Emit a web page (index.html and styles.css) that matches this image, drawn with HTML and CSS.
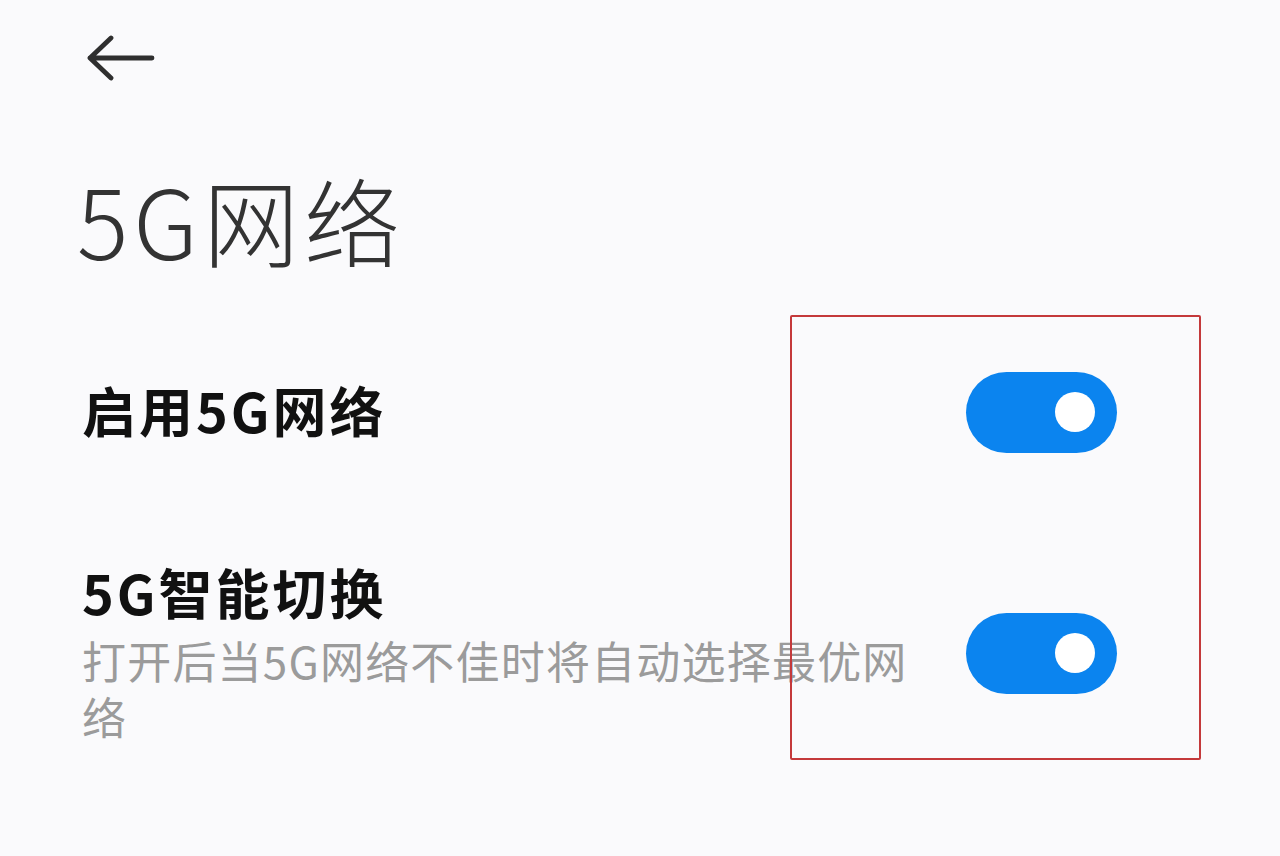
FILE: index.html
```html
<!DOCTYPE html>
<html lang="zh-CN">
<head>
<meta charset="utf-8">
<link rel="stylesheet" href="styles.css">
</head>
<body>
<div class="page">
  <header class="header">
    <svg class="back" viewBox="0 0 68 46" width="68" height="46">
      <path d="M24 3 L3 23 L24 43 M3 23 H65" fill="none" stroke="#2f2f2f" stroke-width="4.8" stroke-linecap="round" stroke-linejoin="round"/>
    </svg>
  </header>
  <h1 class="title">5G网络</h1>
  <div class="list">
    <div class="row row-single">
      <div class="text">
        <div class="label">启用5G网络</div>
      </div>
      <div class="toggle toggle-a"><span class="knob"></span></div>
    </div>
    <div class="row row-double">
      <div class="text">
        <div class="label label-top">5G智能切换</div>
        <div class="desc">打开后当5G网络不佳时将自动选择最优网络</div>
      </div>
      <div class="toggle toggle-b"><span class="knob"></span></div>
    </div>
    <div class="highlight"></div>
  </div>
</div>
</body>
</html>
```
FILE: styles.css
```css
html, body {
  margin: 0;
  padding: 0;
}
body {
  background: #fafafc;
  font-family: "Noto Sans CJK SC", "Noto Sans", sans-serif;
  width: 1280px;
  height: 856px;
  overflow: hidden;
}
.page {
  padding: 0 163px 0 80px;
}
.header {
  padding-top: 35px;
  height: 80px;
}
.back {
  display: block;
  margin-left: 7px;
}
.title {
  margin: 54px 0 0 -3px;
  font-size: 96px;
  line-height: 100px;
  font-weight: 300;
  color: #333;
  letter-spacing: 5px;
}
.list {
  position: relative;
  margin-top: 81px;
}
.row {
  display: flex;
  align-items: center;
  justify-content: space-between;
}
.row-single {
  height: 120px;
}
.row-double {
  margin-top: 87px;
}
.text {
  padding-left: 2px;
}
.label {
  font-size: 54px;
  line-height: 70px;
  font-weight: 700;
  color: #111;
  letter-spacing: 3px;
}
.label-top {
  margin-bottom: 5px;
}
.desc {
  font-size: 44px;
  line-height: 56px;
  color: #9b9b9b;
  width: 840px;
  letter-spacing: 1.2px;
}
.toggle {
  width: 151px;
  height: 81px;
  border-radius: 41px;
  background: #0b84ef;
  position: relative;
  flex: none;
}
.toggle-a {
  margin-top: 4px;
}
.toggle-b {
  margin-top: 6px;
}
.knob {
  position: absolute;
  right: 22px;
  top: 20px;
  width: 40px;
  height: 40px;
  border-radius: 50%;
  background: #fff;
}
.highlight {
  position: absolute;
  left: 710px;
  top: -35px;
  width: 407px;
  height: 441px;
  border: 2px solid #c4393b;
  border-radius: 2px;
}
```
